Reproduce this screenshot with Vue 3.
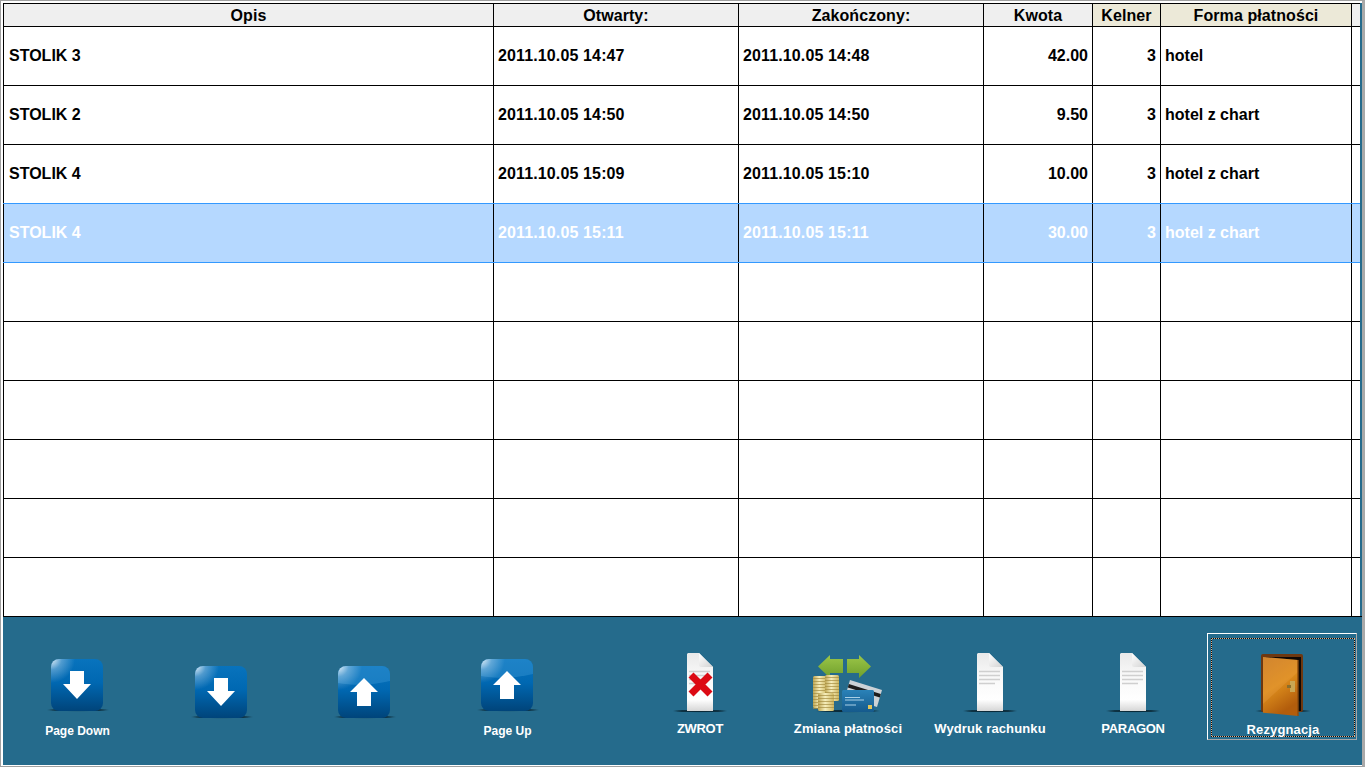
<script setup>
const headers = [
  { text: 'Opis' },
  { text: 'Otwarty:' },
  { text: 'Zakończony:' },
  { text: 'Kwota' },
  { text: 'Kelner', tone: 'beige' },
  { text: 'Forma płatności', tone: 'beige' },
  { text: '' }
]
const filled = [
  ['STOLIK 3', '2011.10.05 14:47', '2011.10.05 14:48', '42.00', '3', 'hotel'],
  ['STOLIK 2', '2011.10.05 14:50', '2011.10.05 14:50', '9.50', '3', 'hotel z chart'],
  ['STOLIK 4', '2011.10.05 15:09', '2011.10.05 15:10', '10.00', '3', 'hotel z chart'],
  ['STOLIK 4', '2011.10.05 15:11', '2011.10.05 15:11', '30.00', '3', 'hotel z chart']
]
const rows = Array.from({ length: 10 }, (_, i) => filled[i] || ['', '', '', '', '', ''])
const coinLines = [0, 1, 2, 3, 4, 5, 6, 7, 8, 9, 10]
</script>

<template>
  <div class="app">
    <svg class="defs" width="0" height="0" aria-hidden="true">
      <defs>
        <linearGradient id="blueBody" x1="0" y1="0" x2="0" y2="1">
          <stop offset="0" stop-color="#0873bd" />
          <stop offset="0.45" stop-color="#0068b2" />
          <stop offset="1" stop-color="#00447a" />
        </linearGradient>
        <radialGradient id="blueGloss" gradientUnits="userSpaceOnUse" cx="6" cy="1" r="24">
          <stop offset="0" stop-color="#ffffff" stop-opacity="0.9" />
          <stop offset="0.45" stop-color="#ffffff" stop-opacity="0.3" />
          <stop offset="1" stop-color="#ffffff" stop-opacity="0" />
        </radialGradient>
        <linearGradient id="page" x1="0" y1="0" x2="0" y2="1">
          <stop offset="0" stop-color="#e9e9e9" />
          <stop offset="0.35" stop-color="#f7f7f7" />
          <stop offset="0.8" stop-color="#ffffff" />
          <stop offset="1" stop-color="#d6d6d6" />
        </linearGradient>
        <linearGradient id="fold" x1="0" y1="0" x2="1" y2="1">
          <stop offset="0" stop-color="#ffffff" />
          <stop offset="1" stop-color="#d2d2d2" />
        </linearGradient>
        <radialGradient id="floor">
          <stop offset="0" stop-color="#06202c" stop-opacity="1" />
          <stop offset="0.7" stop-color="#06202c" stop-opacity="0.75" />
          <stop offset="1" stop-color="#06202c" stop-opacity="0" />
        </radialGradient>
        <linearGradient id="green" x1="0" y1="0" x2="0" y2="1">
          <stop offset="0" stop-color="#9cc648" />
          <stop offset="1" stop-color="#6f9f2c" />
        </linearGradient>
        <linearGradient id="cardBlue" x1="0" y1="0" x2="0" y2="1">
          <stop offset="0" stop-color="#2a82b8" />
          <stop offset="1" stop-color="#155a8c" />
        </linearGradient>
        <linearGradient id="coin" x1="0" y1="0" x2="1" y2="0">
          <stop offset="0" stop-color="#bda552" />
          <stop offset="0.45" stop-color="#f6eebc" />
          <stop offset="1" stop-color="#ccb55f" />
        </linearGradient>
        <linearGradient id="leaf" x1="0" y1="0" x2="0.4" y2="1">
          <stop offset="0" stop-color="#c87a24" />
          <stop offset="0.55" stop-color="#dc8c1c" />
          <stop offset="1" stop-color="#b25d0c" />
        </linearGradient>
      </defs>
    </svg>

    <div class="table">
      <div class="grid head">
        <div v-for="(h, i) in headers" :key="i" class="cell hcell" :class="h.tone">{{ h.text }}</div>
      </div>
      <div v-for="(row, r) in rows" :key="r" class="grid row" :class="{ sel: r === 3 }">
        <div class="cell">{{ row[0] }}</div>
        <div class="cell date">{{ row[1] }}</div>
        <div class="cell date">{{ row[2] }}</div>
        <div class="cell num">{{ row[3] }}</div>
        <div class="cell num">{{ row[4] }}</div>
        <div class="cell">{{ row[5] }}</div>
        <div class="cell"></div>
      </div>
    </div>

    <div class="panel">
      <div class="group left">
        <div class="btn nav first">
          <svg class="blue" viewBox="0 0 66 54">
            <ellipse cx="33" cy="52" rx="33" ry="1.6" fill="url(#floor)" />
            <rect x="6" y="1" width="52" height="52" rx="8" fill="url(#blueBody)" />
            <rect x="6" y="1" width="52" height="52" rx="8" fill="url(#blueGloss)" />
            <path d="M25 13H39V26H46L32 41L18 26H25Z" fill="#fff" />
          </svg>
          <span class="label small">Page Down</span>
        </div>
        <div class="btn nav low">
          <svg class="blue" viewBox="0 0 66 54">
            <ellipse cx="33" cy="52" rx="33" ry="1.6" fill="url(#floor)" />
            <rect x="6" y="1" width="52" height="52" rx="8" fill="url(#blueBody)" />
            <rect x="6" y="1" width="52" height="52" rx="8" fill="url(#blueGloss)" />
            <path d="M25 13H39V26H46L32 41L18 26H25Z" fill="#fff" />
          </svg>
        </div>
        <div class="btn nav low">
          <svg class="blue" viewBox="0 0 66 54">
            <ellipse cx="33" cy="52" rx="33" ry="1.6" fill="url(#floor)" />
            <rect x="6" y="1" width="52" height="52" rx="8" fill="url(#blueBody)" />
            <path d="M6 9a8 8 0 0 1 8-8H50a8 8 0 0 1 8 8V16C42 20 22 21 6 18Z" fill="#3f9ad8" fill-opacity="0.4" />
            <rect x="6" y="1" width="52" height="52" rx="8" fill="url(#blueGloss)" />
            <path d="M32 13L46 27H39V41H25V27H18Z" fill="#fff" />
          </svg>
        </div>
        <div class="btn nav">
          <svg class="blue" viewBox="0 0 66 54">
            <ellipse cx="33" cy="52" rx="33" ry="1.6" fill="url(#floor)" />
            <rect x="6" y="1" width="52" height="52" rx="8" fill="url(#blueBody)" />
            <path d="M6 9a8 8 0 0 1 8-8H50a8 8 0 0 1 8 8V16C42 20 22 21 6 18Z" fill="#3f9ad8" fill-opacity="0.4" />
            <rect x="6" y="1" width="52" height="52" rx="8" fill="url(#blueGloss)" />
            <path d="M32 13L46 27H39V41H25V27H18Z" fill="#fff" />
          </svg>
          <span class="label small">Page Up</span>
        </div>
      </div>

      <div class="group right">
        <div class="btn act w150">
          <svg class="doc" viewBox="0 0 58 60">
            <ellipse cx="29" cy="58" rx="29" ry="1.6" fill="url(#floor)" />
            <path d="M17 0H28L42 14V58H16V1Z" fill="url(#page)" />
            <path d="M28 0L42 14H30Q28 14 28 12Z" fill="url(#fold)" />
            <path d="M18 18.5H39M18 22.5H39M18 26.5H39M18 30.5H33" stroke="#cfcfcf" stroke-width="1.4" />
            <path d="M20 22L39 41M39 22L20 41" stroke="#dc0a14" stroke-width="7" />
          </svg>
          <span class="label shrink">ZWROT</span>
        </div>
        <div class="btn act w146">
          <svg class="pay" viewBox="0 0 72 60">
            <ellipse cx="36" cy="58" rx="34" ry="1.6" fill="url(#floor)" />
            <path d="M6 13.5L18 2V6H31V20H18V25Z" fill="url(#green)" />
            <path d="M59 13.5L47 2V6H35V20H47V25Z" fill="url(#green)" />
            <rect x="1" y="23" width="14" height="32" rx="1.5" fill="url(#coin)" />
            <path v-for="n in coinLines" :key="'a' + n" :d="`M1 ${25.5 + n * 3}H15`" stroke="#a58d40" stroke-width="0.7" />
            <rect x="13" y="22" width="14" height="26" rx="1.5" fill="url(#coin)" />
            <path v-for="n in 8" :key="'b' + n" :d="`M13 ${21.5 + n * 3}H27`" stroke="#a58d40" stroke-width="0.7" />
            <path d="M38 27L70 37L65 54L33 44Z" fill="#ccd2d6" />
            <path d="M36.8 31L68.8 41L67.8 44.5L35.8 34.5Z" fill="#1d1d1d" />
            <rect x="30" y="37" width="32" height="22" rx="1.5" fill="url(#cardBlue)" />
            <path d="M33 44.5H48M33 47H52M33 52H44" stroke="#a9d0e6" stroke-width="1" />
            <rect x="56" y="52" width="4" height="4" fill="#e3c65a" />
            <rect x="6" y="40" width="16" height="18" rx="1.5" fill="url(#coin)" />
            <path v-for="n in 5" :key="'c' + n" :d="`M6 ${39.5 + n * 3}H22`" stroke="#a58d40" stroke-width="0.7" />
          </svg>
          <span class="label wide">Zmiana płatności</span>
        </div>
        <div class="btn act w138">
          <svg class="doc" viewBox="0 0 58 60">
            <ellipse cx="29" cy="58" rx="29" ry="1.6" fill="url(#floor)" />
            <path d="M17 0H28L42 14V58H16V1Z" fill="url(#page)" />
            <path d="M28 0L42 14H30Q28 14 28 12Z" fill="url(#fold)" />
            <path d="M18 18.5H39M18 22.5H39M18 26.5H39M18 30.5H34" stroke="#cfcfcf" stroke-width="1.4" />
          </svg>
          <span class="label wide">Wydruk rachunku</span>
        </div>
        <div class="btn act w148">
          <svg class="doc" viewBox="0 0 58 60">
            <ellipse cx="29" cy="58" rx="29" ry="1.6" fill="url(#floor)" />
            <path d="M17 0H28L42 14V58H16V1Z" fill="url(#page)" />
            <path d="M28 0L42 14H30Q28 14 28 12Z" fill="url(#fold)" />
            <path d="M18 18.5H39M18 22.5H39M18 26.5H39M18 30.5H34" stroke="#cfcfcf" stroke-width="1.4" />
          </svg>
          <span class="label shrink">PARAGON</span>
        </div>
        <div class="btn focus">
          <div class="dotted">
            <svg class="door" viewBox="0 0 58 64">
              <ellipse cx="29" cy="57" rx="29" ry="1.8" fill="url(#floor)" />
              <rect x="7" y="0" width="42" height="58" rx="2" fill="#6e3810" />
              <rect x="12" y="3" width="35" height="54" fill="#100804" />
              <path d="M9 3L44 6V62L9 58.7Z" fill="url(#leaf)" />
              <path d="M9 3L44 6V18L9 50Z" fill="#efa955" fill-opacity="0.25" />
              <path d="M44 6V62" stroke="#8d4c0e" stroke-width="1.4" />
              <rect x="36" y="27" width="5" height="11" fill="#c9a653" />
              <rect x="33" y="31" width="4" height="3" fill="#8a6e2c" />
            </svg>
            <span class="label wide">Rezygnacja</span>
          </div>
        </div>
      </div>
    </div>
  </div>
</template>

<style scoped>
.app {
  width: 1365px;
  height: 767px;
  box-sizing: border-box;
  display: flex;
  flex-direction: column;
  overflow: hidden;
  background: #fff;
  border-style: solid;
  border-color: #a0a0a0 #a9a9a9 #a0a0a0 #a0a0a0;
  border-width: 1px 3px 1px 1px;
  padding: 2px 0 1px 2px;
  font-family: "Liberation Sans", Arial, sans-serif;
  font-weight: 700;
  font-size: 16px;
  color: #000;
}
.defs {
  position: absolute;
}
.table {
  background: #256b8c;
  border-bottom: 1px solid #000;
  flex: none;
}
.grid {
  display: grid;
  grid-template-columns: 490px 245px 245px 109px 68px 191px 9px;
  width: 1357px;
  box-sizing: border-box;
  background: #fff;
}
.head {
  height: 23px;
  border-top: 1px solid #000;
}
.row {
  height: 59px;
  border-top: 1px solid #000;
}
.row.sel,
.row.sel + .row {
  border-top-color: #3399ff;
}
.row.sel {
  background: #b5d8ff;
  color: #fff;
}
.cell {
  box-sizing: border-box;
  border-left: 1px solid #000;
  padding: 0 4px;
  display: flex;
  align-items: center;
  white-space: nowrap;
  min-width: 0;
  overflow: hidden;
}
.cell:first-child {
  padding-left: 5px;
}
.date {
  letter-spacing: 0.13px;
}
.hcell,
.hcell:first-child {
  justify-content: center;
  background: #efefef;
  line-height: 22px;
  padding: 1px 0 0;
  letter-spacing: 0.08px;
}
.hcell.beige {
  background: #ece9d8;
}
.num {
  justify-content: flex-end;
}
.panel {
  flex: 1;
  background: #256b8c;
  display: flex;
  padding: 16px 5px 0 4px;
  justify-content: space-between;
  align-items: flex-start;
  color: #fff;
}
.group {
  display: flex;
}
.btn {
  height: 107px;
  box-sizing: border-box;
  display: flex;
  flex-direction: column;
  align-items: center;
  flex: none;
}
.nav {
  width: 143px;
  padding-top: 25px;
}
.nav.first {
  margin-left: -1px;
  margin-right: 1px;
}
.nav.low {
  padding-top: 32px;
}
.blue {
  width: 66px;
  height: 54px;
  flex: none;
}
.act {
  padding-top: 20px;
}
.w150 { width: 150px; }
.w146 { width: 146px; }
.w138 { width: 138px; }
.w148 { width: 148px; }
.doc {
  width: 58px;
  height: 60px;
  flex: none;
}
.pay {
  width: 72px;
  height: 60px;
  flex: none;
}
.door {
  width: 58px;
  height: 64px;
  flex: none;
}
.label {
  font-size: 13px;
  line-height: 16px;
  white-space: nowrap;
  margin-top: 8px;
}
.small {
  font-size: 12px;
  margin-top: 11px;
}
.wide {
  letter-spacing: 0.13px;
}
.shrink {
  letter-spacing: -0.3px;
}
.focus {
  width: 150px;
  border: 1px solid;
  border-color: #fff #a8a8a8 #a8a8a8 #fff;
  padding: 4px 1px 2px 3px;
}
.dotted {
  width: 100%;
  height: 100%;
  box-sizing: border-box;
  display: flex;
  flex-direction: column;
  align-items: center;
  padding-top: 16px;
  background:
    repeating-linear-gradient(90deg, #0b0b0b 0 1px, #e2b08a 1px 2px) top left / 100% 1px no-repeat,
    repeating-linear-gradient(90deg, #0b0b0b 0 1px, #e2b08a 1px 2px) bottom left / 100% 1px no-repeat,
    repeating-linear-gradient(0deg, #0b0b0b 0 1px, #e2b08a 1px 2px) top left / 1px 100% no-repeat,
    repeating-linear-gradient(0deg, #0b0b0b 0 1px, #e2b08a 1px 2px) top right / 1px 100% no-repeat;
}
.dotted .label {
  margin-top: 4px;
}
</style>
